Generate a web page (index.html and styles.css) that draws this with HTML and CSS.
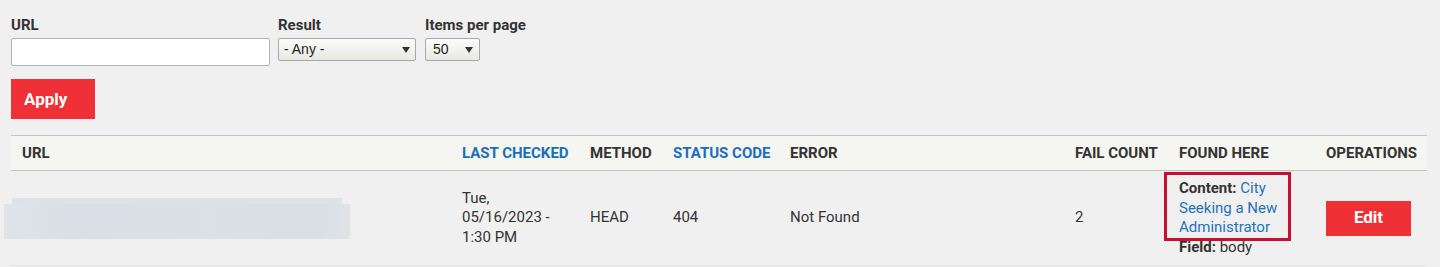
FILE: index.html
```html
<!DOCTYPE html>
<html lang="en">
<head>
<meta charset="utf-8">
<title>Broken links</title>
<link rel="stylesheet" href="styles.css">
</head>
<body>
<form class="filters">
  <div class="fields">
    <div class="field field-url">
      <label class="label">URL</label>
      <div class="text-input"></div>
    </div>
    <div class="field field-result">
      <label class="label">Result</label>
      <div class="select select-result"><span class="select-text">- Any -</span><span class="arrow"></span></div>
    </div>
    <div class="field field-items">
      <label class="label">Items per page</label>
      <div class="select select-items"><span class="select-text">50</span><span class="arrow"></span></div>
    </div>
  </div>
  <div class="btn btn-apply">Apply</div>
</form>

<table class="links">
  <thead>
    <tr>
      <th class="c-url">URL</th>
      <th class="c-checked"><span class="sort">LAST CHECKED</span></th>
      <th class="c-method">METHOD</th>
      <th class="c-status"><span class="sort">STATUS CODE</span></th>
      <th class="c-error">ERROR</th>
      <th class="c-fail">FAIL COUNT</th>
      <th class="c-found">FOUND HERE</th>
      <th class="c-ops">OPERATIONS</th>
    </tr>
  </thead>
  <tbody>
    <tr>
      <td class="c-url">
        <div class="redact-top"></div>
        <div class="redact-main"></div>
      </td>
      <td class="c-checked">Tue,<br>05/16/2023 -<br>1:30 PM</td>
      <td class="c-method">HEAD</td>
      <td class="c-status">404</td>
      <td class="c-error">Not Found</td>
      <td class="c-fail">2</td>
      <td class="c-found">
        <div class="found-wrap">
          <div class="found-content"><strong>Content:</strong> <span class="link">City Seeking a New Administrator</span></div>
          <div><strong>Field:</strong> body</div>
          <div class="highlight"></div>
        </div>
      </td>
      <td class="c-ops"><div class="btn btn-edit">Edit</div></td>
    </tr>
  </tbody>
</table>
</body>
</html>
```

FILE: styles.css
```css
* { box-sizing: border-box; }

html, body {
  margin: 0;
  padding: 0;
  background: #f0f0f0;
}

body {
  padding: 14px 13px 0 11px;
  font-family: Roboto, "Liberation Sans", Arial, sans-serif;
  font-size: 15px;
  line-height: 20px;
  color: #333333;
}

.filters {
  margin: 0;
}

.fields {
  display: flex;
  align-items: flex-start;
}

.field {
  display: flex;
  flex-direction: column;
}

.field-url { width: 259px; margin-right: 8px; }
.field-result { width: 138px; margin-right: 9px; }
.field-items { width: 55px; }

.label {
  font-weight: 700;
  color: #333;
  height: 20px;
  margin-bottom: 4px;
  padding-top: 1px;
  white-space: nowrap;
}

.text-input {
  height: 28px;
  background: #fefefe;
  border: 1px solid #b4b4b4;
  border-radius: 2px;
}

.select {
  position: relative;
  height: 23px;
  border: 1px solid #a9a9a9;
  border-radius: 2px;
  background: linear-gradient(#fbfbf9, #e9e9e3);
  font-family: "Liberation Sans", Arial, sans-serif;
  font-size: 14px;
  line-height: 21px;
  color: #222;
  padding-left: 5px;
}

.select-items { padding-left: 7px; }

.arrow {
  position: absolute;
  right: 5px;
  top: 8px;
  width: 0;
  height: 0;
  border-left: 4px solid transparent;
  border-right: 4px solid transparent;
  border-top: 6px solid #333;
}

.select-result .arrow { right: 5px; }
.select-items .arrow { right: 6px; }

.btn {
  display: flex;
  align-items: center;
  background: #ef3036;
  color: #ffffff;
  font-weight: 700;
  font-size: 17px;
}

.btn-apply {
  width: 84px;
  height: 40px;
  margin-top: 13px;
  padding-left: 13px;
}

.links {
  margin-top: 16px;
  width: 1416px;
  border-collapse: collapse;
  table-layout: fixed;
}

.links th {
  text-align: left;
  font-weight: 700;
  background: #f5f5f1;
  border-top: 1px solid #c4c4c0;
  border-bottom: 1px solid #c4c4c0;
  padding: 6px 11px 7px;
  height: 35px;
  white-space: nowrap;
  color: #333;
}

.links .sort { color: #1a6fbd; }

.links td {
  padding: 8px 11px;
  vertical-align: middle;
  border-bottom: 1px solid #e2e2dc;
  line-height: 19.6px;
}

.c-url { width: 440px; }
.c-checked { width: 128px; }
.c-method { width: 83px; }
.c-status { width: 117px; }
.c-error { width: 285px; }
.c-fail { width: 104px; }
.c-found { width: 147px; }
.c-ops { width: 112px; }

.redact-top {
  margin-left: -10px;
  width: 330px;
  height: 6px;
  background: #dde2e8;
}

.redact-main {
  margin-left: -18px;
  width: 346px;
  height: 35px;
  background: linear-gradient(90deg, #e0e4e9, #d9dfe6 20%, #dce1e8 60%, #d9dee5 90%, #e0e4e9);
}

.found-wrap {
  position: relative;
}

.link { color: #1f72bf; }

.highlight {
  position: absolute;
  left: -15px;
  top: -7px;
  width: 127px;
  height: 69px;
  border: 3px solid #c8102e;
  pointer-events: none;
}

.c-ops { padding-left: 11px; }

.btn-edit {
  width: 85px;
  height: 35px;
  justify-content: center;
}
```
